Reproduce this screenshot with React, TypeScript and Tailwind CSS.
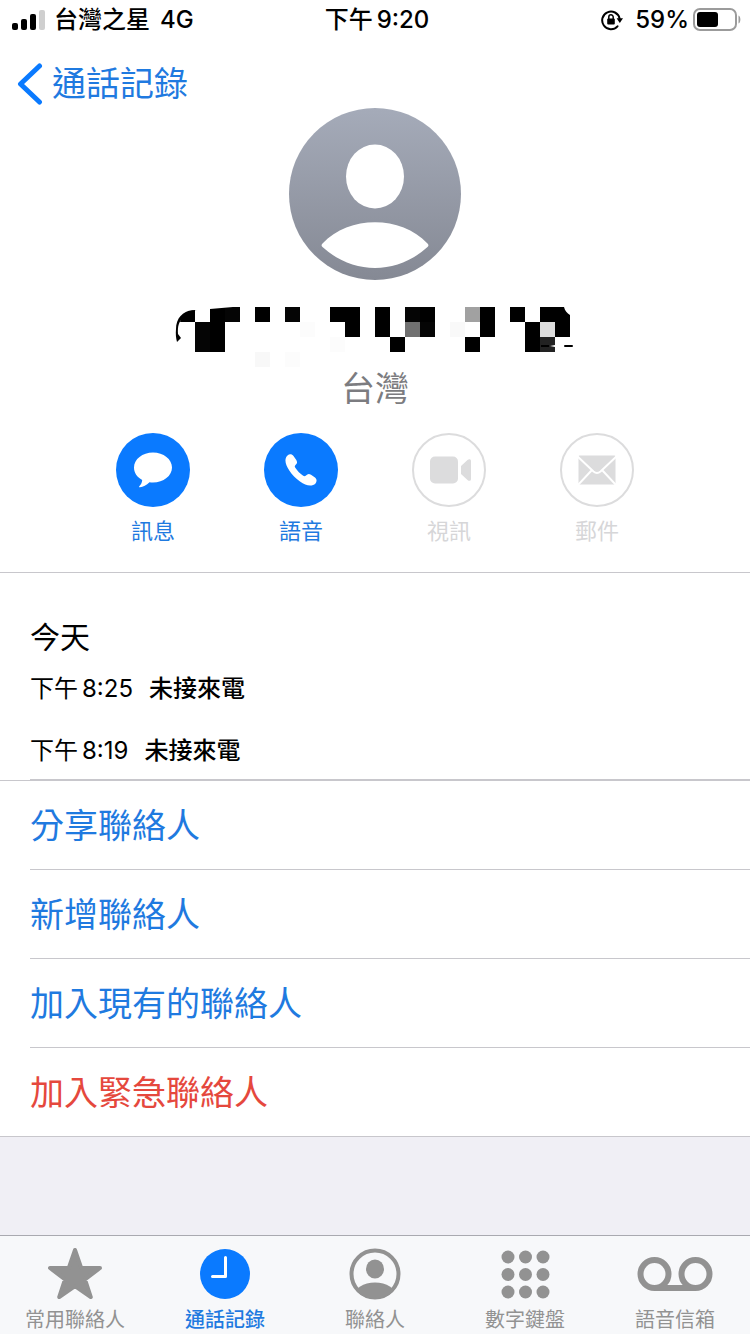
import type { ReactNode } from 'react';

const BLUE = 'text-[#1f7ae0]';

function SignalIcon() {
  return (
    <svg width="34" height="22" viewBox="0 0 34 22" aria-hidden="true">
      <rect x="0" y="14" width="6" height="7" rx="2" />
      <rect x="9" y="10" width="6" height="11" rx="2" />
      <rect x="18" y="5" width="6" height="16" rx="2" />
      <rect x="27" y="1" width="6" height="20" rx="2" fill="#cfcfcf" />
    </svg>
  );
}

function RotationLockIcon() {
  return (
    <svg width="22" height="22" viewBox="0 0 22 22" aria-hidden="true">
      <path d="M16.5 17.3A8.8 8.8 0 1 1 18.6 9.5" fill="none" stroke="#000" strokeWidth="2" strokeLinecap="round" />
      <path d="M15.6 9.2h6.4l-3.2 4.8z" />
      <rect x="6.2" y="9.4" width="7.6" height="6" rx="1" />
      <path d="M7.8 10V8a2.2 2.2 0 0 1 4.4 0v2" fill="none" stroke="#000" strokeWidth="1.5" />
    </svg>
  );
}

function BatteryIcon() {
  return (
    <svg width="49" height="24" viewBox="0 0 49 24" aria-hidden="true">
      <rect x="1" y="1" width="42" height="21" rx="6" fill="none" stroke="#9b9b9b" strokeWidth="2" />
      <rect x="4" y="4" width="21" height="15" rx="3" />
      <path d="M45.5 7.5c2.5 1 2.5 7 0 8z" fill="#9b9b9b" />
    </svg>
  );
}

function StatusBar() {
  return (
    <div className="grid h-10 grid-cols-3 items-center pr-2 pl-3 text-2xl font-medium">
      <div className="flex items-center gap-2">
        <SignalIcon />
        <span className="flex gap-2.5 whitespace-nowrap">
          <span>台灣之星</span>
          <span>4G</span>
        </span>
      </div>
      <div className="flex justify-center gap-1">
        <span>下午</span>
        <span>9:20</span>
      </div>
      <div className="flex items-center justify-end gap-1">
        <RotationLockIcon />
        <span className="ml-2">59%</span>
        <BatteryIcon />
      </div>
    </div>
  );
}

function Avatar() {
  return (
    <svg width="172" height="172" viewBox="0 0 172 172" role="img" aria-label="聯絡人照片">
      <defs>
        <linearGradient id="avatar" x1="0" y1="0" x2="0" y2="1">
          <stop offset="0" stopColor="#a5abb9" />
          <stop offset="1" stopColor="#858994" />
        </linearGradient>
      </defs>
      <circle cx="86" cy="86" r="86" fill="url(#avatar)" />
      <ellipse cx="86" cy="68.5" rx="29" ry="32" fill="#fff" />
      <path d="M33.5 135.5C60 107 112 107 138.5 135.5C140 137 139.5 138 138.5 139C108 167 64 167 33.5 139C32.5 138 32 137 33.5 135.5Z" fill="#fff" />
    </svg>
  );
}

// [column, row, colour] on a 15px grid
const mosaic: [number, number, string][] = [
  [2, 0, '#000'], [3, 0, '#050505'], [5, 0, '#000'], [7, 0, '#050505'],
  [10, 0, '#000'], [11, 0, '#000'], [13, 0, '#000'], [15, 0, '#050505'], [16, 0, '#000'],
  [19, 0, '#a1a1a1'], [20, 0, '#000'], [22, 0, '#000'], [24, 0, '#000'],
  [1, 1, '#050505'], [2, 1, '#000'], [11, 1, '#000'], [13, 1, '#000'], [15, 1, '#707070'],
  [16, 1, '#050505'], [18, 1, '#f9f9f9'], [20, 1, '#000'], [23, 1, '#000'], [24, 1, '#ddd'], [25, 1, '#000'],
  [1, 2, '#050505'], [2, 2, '#000'], [14, 2, '#000'], [19, 2, '#000'], [23, 2, '#000'], [24, 2, '#222'],
  [8, 1, '#fcfcfc'], [10, 2, '#fcfcfc'], [5, 3, '#f8f8f8'], [7, 3, '#fcfcfc'],
];

function HiddenNumber() {
  return (
    <svg width="400" height="65" viewBox="0 0 400 65" aria-hidden="true">
      {mosaic.map(([col, row, fill]) => (
        <rect key={`${col}-${row}`} x={5 + col * 15} y={3 + row * 15} width="15" height="15" fill={fill} />
      ))}
      <path d="M5 18C7 11 12 6 20 6V18Z" />
      <path d="M22 7C10 4 1 13 1 25C0.5 30 1 34 2 38L6 34L3 30C2.500 22 4 18 7 15C10 9 15 7 22 7Z" />
      <path d="M35 5L58 3H35Z" fill="#fff" />
      <path d="M380 3H389C390 7 392 9 395 11V18H380Z" />
      <path d="M390 42h7" stroke="#000" strokeWidth="2" strokeLinecap="round" />
      <path d="M375 42l5-1v2z" fill="#fff" />
      <path d="M366 42h8" stroke="#000" strokeWidth="2" />
    </svg>
  );
}

function BubbleIcon() {
  return (
    <svg width="38" height="36" viewBox="0 0 38 36" aria-hidden="true">
      <path d="M19 0.5C29.5 0.5 38 7.2 38 15.5S29.5 30.5 19 30.5C17.8 30.5 16.6 30.4 15.5 30.2C12.5 33 9 35 6 35.3C5 35.4 4.8 34.7 5.5 34C7 32.5 8 30.5 8.2 28C3 25.2 0 20.7 0 15.5C0 7.2 8.5 0.5 19 0.5Z" fill="#fff" />
    </svg>
  );
}

function PhoneIcon() {
  return (
    <svg width="32" height="32" viewBox="0 0 32 32" aria-hidden="true">
      <path d="M2.5 1.5C4.5 -0.5 7 0 8.500 2L11.300 6C12.500 8 12.200 9.500 10.500 11C9.500 12 9.600 12.600 10.300 13.700C12.500 17 15 19.500 18.200 21.700C19.300 22.400 20 22.400 21 21.500C22.500 19.800 24 19.500 26 20.700L30 23.500C32 25 32 27.500 30.500 29.500C27 33 21 32 15 27.500C10.500 24.200 7.300 21 4.300 16.500C0.200 10.500 -1 5 2.500 1.500Z" fill="#fff" />
    </svg>
  );
}

function VideoIcon() {
  return (
    <svg width="44" height="28" viewBox="-3 0 44 28" fill="#dcdcdd" aria-hidden="true">
      <rect x="0" y="0.5" width="28" height="27" rx="5" />
      <path d="M31 10L37.5 4C39 2.8 41 3 41 5V23C41 25 39 25.5 37.5 24L31 18Z" />
    </svg>
  );
}

function MailIcon() {
  return (
    <svg width="38" height="30" viewBox="0 0 38 30" aria-hidden="true">
      <rect x="0.5" y="0.5" width="37" height="29" rx="1" fill="#dcdcdd" />
      <path d="M-1 1L15.5 16.5Q19 19.5 22.5 16.5L39 1M-0.5 30.5L13.5 15.5M38.5 30.5L24.5 15.5" fill="none" stroke="#fff" strokeWidth="2" />
    </svg>
  );
}

function ActionButton({ icon, label, disabled }: { icon: ReactNode; label: string; disabled?: boolean }) {
  return (
    <button type="button" disabled={disabled} className="flex w-[74px] flex-col items-center gap-2">
      <span
        className={
          disabled
            ? 'flex size-[74px] items-center justify-center rounded-full border-2 border-[#dcdcdd]'
            : 'flex size-[74px] items-center justify-center rounded-full bg-[#0a7aff]'
        }
      >
        {icon}
      </span>
      <span className={`text-[22px] leading-8 ${disabled ? 'text-[#d6d6d8]' : BLUE}`}>{label}</span>
    </button>
  );
}

const calls = [
  { period: '下午', time: '8:25', status: '未接來電' },
  { period: '下午', time: '8:19', status: '未接來電' },
];

const options = [
  { label: '分享聯絡人' },
  { label: '新增聯絡人' },
  { label: '加入現有的聯絡人' },
  { label: '加入緊急聯絡人', danger: true },
];

function StarIcon() {
  return (
    <svg width="56" height="54" viewBox="0 0 56 54" aria-hidden="true">
      <path d="M28 3L34.2 21H53L38 32.3L43.8 50L28 39L12.2 50L18 32.3L3 21H21.8Z" fill="currentColor" stroke="currentColor" strokeWidth="4" strokeLinejoin="round" />
    </svg>
  );
}

function ClockIcon() {
  return (
    <svg width="50" height="50" viewBox="0 0 50 50" aria-hidden="true">
      <circle cx="25" cy="25" r="25" fill="#0a7aff" />
      <path d="M25.5 8.5V27.5H12.5" fill="none" stroke="#fff" strokeWidth="3" strokeLinecap="round" strokeLinejoin="round" />
    </svg>
  );
}

function PersonIcon() {
  return (
    <svg width="52" height="52" viewBox="0 0 52 52" aria-hidden="true">
      <clipPath id="person">
        <circle cx="26" cy="26" r="25" />
      </clipPath>
      <circle cx="26" cy="26" r="23.5" fill="none" stroke="currentColor" strokeWidth="4" />
      <ellipse cx="26" cy="21" rx="9" ry="9.5" fill="currentColor" />
      <ellipse cx="26" cy="48" rx="21" ry="13.5" fill="currentColor" clipPath="url(#person)" />
    </svg>
  );
}

function KeypadIcon() {
  const dots = [7, 24.5, 42];
  return (
    <svg width="49" height="49" viewBox="0 0 49 49" aria-hidden="true">
      {dots.map((cy) => dots.map((cx) => <circle key={`${cx}-${cy}`} cx={cx} cy={cy} r="6.5" fill="currentColor" />))}
    </svg>
  );
}

function VoicemailIcon() {
  return (
    <svg width="76" height="36" viewBox="0 0 76 36" fill="none" stroke="currentColor" strokeWidth="6" aria-hidden="true">
      <circle cx="17.5" cy="18" r="14" />
      <circle cx="58.5" cy="18" r="14" />
      <path d="M17.5 32H58.5" />
    </svg>
  );
}

const tabs = [
  { label: '常用聯絡人', icon: <StarIcon /> },
  { label: '通話記錄', icon: <ClockIcon />, active: true },
  { label: '聯絡人', icon: <PersonIcon /> },
  { label: '數字鍵盤', icon: <KeypadIcon /> },
  { label: '語音信箱', icon: <VoicemailIcon /> },
];

export default function App() {
  return (
    <div className="flex min-h-screen flex-col bg-[#f0eff5] font-['Inter','Noto_Sans_CJK_TC',sans-serif] text-black">
      <div className="bg-white">
        <StatusBar />
        <header className="flex h-[68px] items-start px-4 pt-5">
          <button type="button" className={`flex items-center gap-2 text-[34px] leading-12 ${BLUE}`}>
            <svg width="28" height="42" viewBox="0 0 28 42" fill="none" aria-hidden="true">
              <path d="M23.5 3L4.5 21L23.5 39" stroke="#0a7aff" strokeWidth="5" strokeLinecap="round" strokeLinejoin="round" />
            </svg>
            通話記錄
          </button>
        </header>

        <section className="flex flex-col items-center border-b border-[#c8c7cc] pb-[25px]">
          <Avatar />
          <div className="mt-6">
            <HiddenNumber />
          </div>
          <p className="text-[34px] leading-10 text-[#7c7c80]">台灣</p>
          <div className="mt-6 flex gap-[74px]">
            <ActionButton icon={<BubbleIcon />} label="訊息" />
            <ActionButton icon={<PhoneIcon />} label="語音" />
            <ActionButton icon={<VideoIcon />} label="視訊" disabled />
            <ActionButton icon={<MailIcon />} label="郵件" disabled />
          </div>
        </section>

        <section className="border-b border-[#c8c7cc] pt-10 pl-[30px]">
          <h2 className="text-3xl leading-12">今天</h2>
          <ul className="flex flex-col gap-[22px] border-b border-[#c8c7cc] pt-2 pb-2">
            {calls.map((call) => (
              <li key={call.time} className="flex gap-4 text-2xl leading-10">
                <span className="flex gap-1">
                  <span>{call.period}</span>
                  <span>{call.time}</span>
                </span>
                <span className="font-medium">{call.status}</span>
              </li>
            ))}
          </ul>
        </section>

        <ul className="border-b border-[#c8c7cc] pl-[30px]">
          {options.map((option) => (
            <li key={option.label} className="border-b border-[#c8c7cc] last:border-b-0">
              <button
                type="button"
                className={`flex h-[88px] w-full items-center text-[34px] ${option.danger ? 'text-[#e5483d]' : BLUE}`}
              >
                {option.label}
              </button>
            </li>
          ))}
        </ul>
      </div>

      <nav className="mt-auto grid h-[99px] grid-cols-5 border-t border-[#a9a9b0] bg-[#f7f8fa]">
        {tabs.map((tab) => (
          <a
            key={tab.label}
            href="#"
            aria-current={tab.active ? 'page' : undefined}
            className={`flex flex-col items-center pt-2 text-xl leading-8 ${tab.active ? 'font-medium text-[#1f7ae0]' : 'text-[#929292]'}`}
          >
            <span className="flex h-[60px] items-center">{tab.icon}</span>
            {tab.label}
          </a>
        ))}
      </nav>
    </div>
  );
}
